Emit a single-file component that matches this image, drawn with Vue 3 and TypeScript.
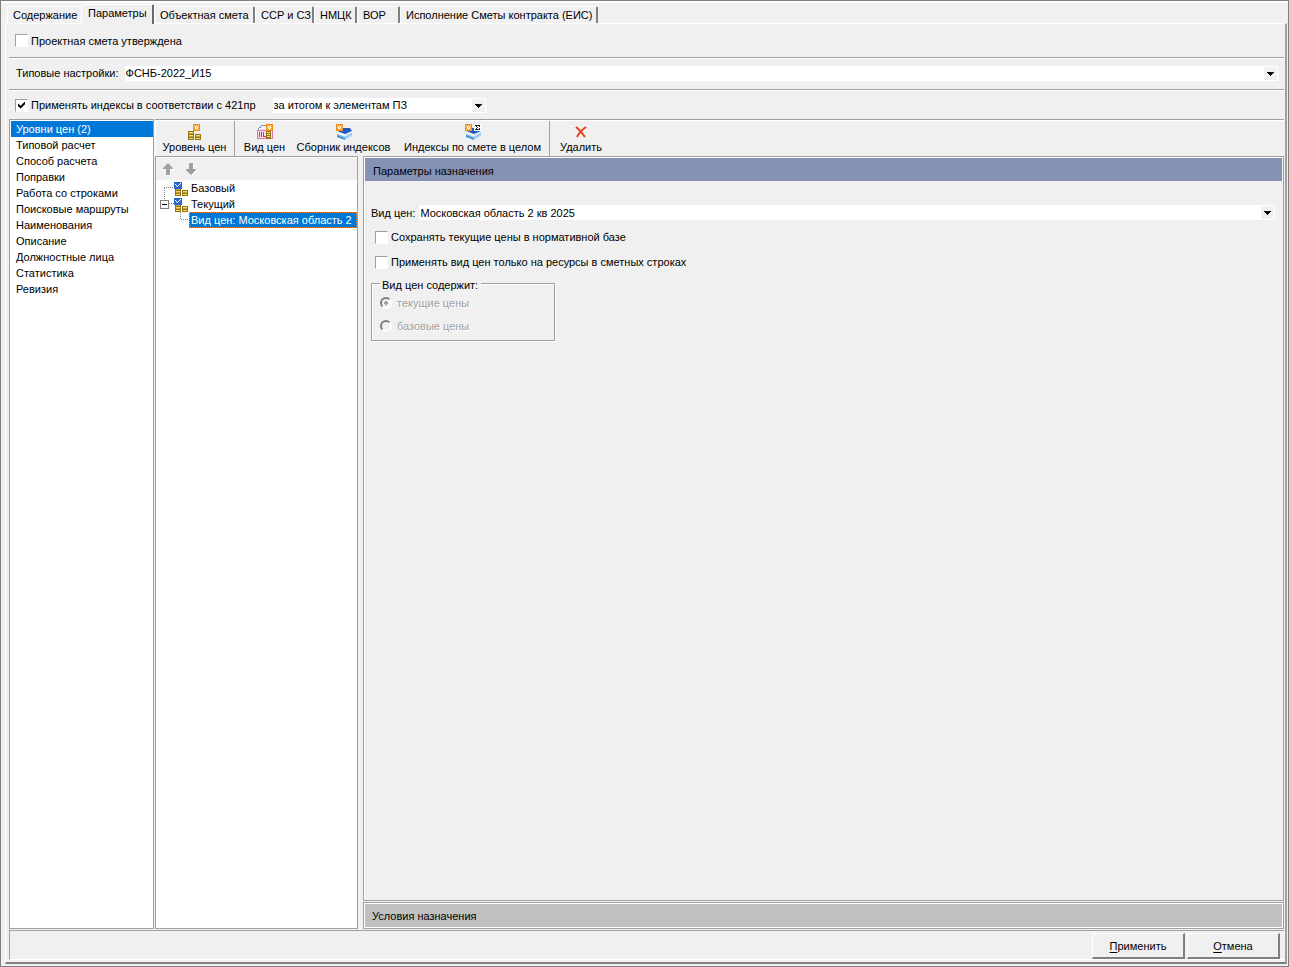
<script setup lang="ts">
import { ref } from 'vue'

interface Tool {
  label: string
  icon: string
  separated?: boolean
}

const tabs: string[] = ['Содержание', 'Параметры', 'Объектная смета', 'ССР и СЗ', 'НМЦК', 'ВОР', 'Исполнение Сметы контракта (ЕИС)']
const activeTab = ref(1)

const sections: string[] = [
  'Уровни цен (2)', 'Типовой расчет', 'Способ расчета', 'Поправки', 'Работа со строками',
  'Поисковые маршруты', 'Наименования', 'Описание', 'Должностные лица', 'Статистика', 'Ревизия',
]
const activeSection = ref(0)

const tools: Tool[] = [
  { label: 'Уровень цен', icon: 'level' },
  { label: 'Вид цен', icon: 'kind', separated: true },
  { label: 'Сборник индексов', icon: 'book' },
  { label: 'Индексы по смете в целом', icon: 'sigma' },
  { label: 'Удалить', icon: 'delete', separated: true },
]

const approved = ref(false)
const useIndexes = ref(true)
const keepPrices = ref(false)
const resourcesOnly = ref(false)
</script>

<template>
  <div class="window">
    <svg class="defs" width="0" height="0" aria-hidden="true">
      <defs>
        <g id="spark">
          <rect width="7" height="7" fill="#f58a14" />
          <path d="M1 1h1v1h-1zM3 1h1v1h-1zM5 1h1v1h-1zM1 3h1v1h-1zM5 3h1v1h-1zM1 5h1v1h-1zM3 5h1v1h-1zM5 5h1v1h-1z" fill="#ffd28c" />
          <path d="M2 2h3v3h-3z" fill="#fff6dc" />
          <rect x="3" y="3" width="1" height="1" fill="#f9b45c" />
        </g>
        <g id="coins">
          <path d="M0 0h6v9h-6z" fill="#93731a" />
          <path d="M1 1h4v1h-4zM1 4h4v1h-4zM1 7h4v1h-4z" fill="#f2dc6a" />
          <path d="M1 2h4v1h-4zM1 5h4v1h-4z" fill="#c9a62c" />
          <path d="M7 3h6v6h-6z" fill="#93731a" />
          <path d="M8 4h4v1h-4zM8 7h4v1h-4z" fill="#f2dc6a" />
          <path d="M8 5h4v1h-4z" fill="#c9a62c" />
        </g>
        <g id="books">
          <path d="M1 11l6-3 9 2-7 4z" fill="#5aa2dc" />
          <path d="M1 11l8 3v2l-8-3z" fill="#3f8fd0" />
          <path d="M9 14l7-4v2l-7 4z" fill="#b4d8f0" />
          <path d="M1 7l6-3h7l2 3-7 4z" fill="#2456c4" />
          <path d="M0 8l1-1 8 3 7-3v3l-7 4-9-4z" fill="#d9ecf8" />
          <path d="M1 8l8 3v1l-8-3z" fill="#fff" />
          <path d="M1 10l8 3 7-4v1l-7 4-8-3z" fill="#6fb0e2" />
        </g>
      </defs>
    </svg>

    <div class="tabs" role="tablist">
      <button v-for="(tab, i) in tabs" :key="tab" class="tab" :class="{ active: i === activeTab }" role="tab" :aria-selected="i === activeTab" @click="activeTab = i">{{ tab }}</button>
    </div>

    <main class="page">
      <div class="row">
        <label class="check"><input v-model="approved" type="checkbox"><span>Проектная смета утверждена</span></label>
      </div>
      <div class="row preset">
        <label for="preset">Типовые настройки:</label>
        <span class="combo">
          <select id="preset"><option>ФСНБ-2022_И15</option></select>
          <svg width="13" height="13" viewBox="0 0 13 13" shape-rendering="crispEdges"><path d="M0 0h13v13h-13z" fill="#f0f0f0" /><path d="M3 5h7v1h-1v1h-1v1h-1v1h-1v-1h-1v-1h-1v-1h-1z" /></svg>
        </span>
      </div>
      <div class="row indexes">
        <label class="check"><input v-model="useIndexes" type="checkbox"><span>Применять индексы в соответствии с 421пр</span></label>
        <span class="combo short">
          <select aria-label="Способ применения индексов"><option>за итогом к элементам ПЗ</option></select>
          <svg width="13" height="13" viewBox="0 0 13 13" shape-rendering="crispEdges"><path d="M0 0h13v13h-13z" fill="#f0f0f0" /><path d="M3 5h7v1h-1v1h-1v1h-1v1h-1v-1h-1v-1h-1v-1h-1z" /></svg>
        </span>
      </div>

      <div class="body">
        <nav class="sections">
          <button v-for="(s, i) in sections" :key="s" :class="{ active: i === activeSection }" @click="activeSection = i">{{ s }}</button>
        </nav>

        <div class="workspace">
          <div class="toolbar">
            <button v-for="t in tools" :key="t.label" class="tool" :class="[t.icon, { separated: t.separated }]">
              <svg v-if="t.icon === 'level'" width="16" height="16" viewBox="0 0 16 16" shape-rendering="crispEdges">
                <use href="#spark" x="6" /><use href="#coins" x="1" y="7" />
              </svg>
              <svg v-else-if="t.icon === 'kind'" width="16" height="16" viewBox="0 0 16 16" shape-rendering="crispEdges">
                <path d="M4 1h6v6h-9v-3h1v-1h1v-1h1z" fill="#8aa0ac" /><path d="M4 2h5v5h-7v-3h2z" fill="#eaf1f5" />
                <path d="M0 6h16v9h-16z" fill="#d878a8" /><path d="M1 7h14v7h-14z" fill="#fbdcec" />
                <path d="M2 8h1v5h-1zM4 8h1v5h-1zM6 8h1v5h-1zM6 12h3v1h-3z" fill="#c8327c" />
                <path d="M9 7h5v8h-5z" fill="#93731a" /><path d="M10 8h3v1h-3zM10 10h3v1h-3zM10 12h3v1h-3z" fill="#f2dc6a" />
                <use href="#spark" x="9" />
              </svg>
              <svg v-else-if="t.icon === 'book'" width="16" height="16" viewBox="0 0 16 16">
                <use href="#books" /><use href="#spark" />
              </svg>
              <svg v-else-if="t.icon === 'sigma'" width="16" height="16" viewBox="0 0 16 16">
                <use href="#books" /><use href="#spark" />
                <path d="M9 0h7v7h-7z" fill="#fff" /><path d="M10 1h5v2h-1v-1h-2v1h1v1h-1v1h2v-1h1v2h-5v-1h1v-1h1v-1h-1v-1h-1z" fill="#222" shape-rendering="crispEdges" />
              </svg>
              <svg v-else width="16" height="16" viewBox="0 0 16 16">
                <path d="M3 3q4 3 9 10M13 3q-6 4-9 10" fill="none" stroke="#e8401c" stroke-width="2" />
              </svg>
              <span>{{ t.label }}</span>
            </button>
          </div>

          <div class="columns">
            <section class="tree-panel">
              <div class="tree-head">
                <button aria-label="Вверх"><svg width="12" height="13" viewBox="0 0 12 13"><path d="M6 0l5 5v1h-3v6h-4v-6h-3v-1z" fill="#a0a0a0" /></svg></button>
                <button aria-label="Вниз"><svg width="12" height="13" viewBox="0 0 12 13"><path d="M6 12l5-5v-1h-3v-6h-4v6h-3v1z" fill="#a0a0a0" /></svg></button>
              </div>
              <div class="tree" role="tree">
                <div class="node" role="treeitem">
                  <svg width="31" height="16" viewBox="0 0 31 16" shape-rendering="crispEdges">
                    <path d="M6.500 8v8M6 7.500h10" stroke="#808080" stroke-dasharray="1 1" fill="none" />
                    <use href="#coins" x="17" y="7" /><rect x="16" y="2" width="8" height="7" fill="#2868d0" /><path d="M17 4h1v1h1v1h1v-1h1v-1h1v-1h1v1h-1v1h-1v1h-1v1h-1v-1h-1v-1h-1z" fill="#fff" />
                  </svg>
                  <span>Базовый</span>
                </div>
                <div class="node" role="treeitem" aria-expanded="true">
                  <svg width="31" height="16" viewBox="0 0 31 16" shape-rendering="crispEdges">
                    <path d="M6.500 0v4M11 7.500h5" stroke="#808080" stroke-dasharray="1 1" fill="none" />
                    <rect x="2.500" y="4.500" width="8" height="8" fill="#fff" stroke="#808080" /><path d="M4 8h5v1h-5z" />
                    <use href="#coins" x="17" y="7" /><rect x="16" y="2" width="8" height="7" fill="#2868d0" /><path d="M17 4h1v1h1v1h1v-1h1v-1h1v-1h1v1h-1v1h-1v1h-1v1h-1v-1h-1v-1h-1z" fill="#fff" />
                  </svg>
                  <span>Текущий</span>
                </div>
                <div class="node selected" role="treeitem" aria-selected="true">
                  <svg width="31" height="16" viewBox="0 0 31 16" shape-rendering="crispEdges"><path d="M22.500 0v8M23 7.500h8" stroke="#808080" stroke-dasharray="1 1" fill="none" /></svg>
                  <span>Вид цен: Московская область 2</span>
                </div>
              </div>
            </section>

            <div class="details">
              <section class="assignment">
                <h2>Параметры назначения</h2>
                <div class="field">
                  <label for="kind">Вид цен:</label>
                  <span class="combo">
                    <select id="kind"><option>Московская область 2 кв 2025</option></select>
                    <svg width="13" height="13" viewBox="0 0 13 13" shape-rendering="crispEdges"><path d="M0 0h13v13h-13z" fill="#f0f0f0" /><path d="M3 5h7v1h-1v1h-1v1h-1v1h-1v-1h-1v-1h-1v-1h-1z" /></svg>
                  </span>
                </div>
                <div class="options">
                  <label class="check"><input v-model="keepPrices" type="checkbox"><span>Сохранять текущие цены в нормативной базе</span></label>
                  <label class="check"><input v-model="resourcesOnly" type="checkbox"><span>Применять вид цен только на ресурсы в сметных строках</span></label>
                </div>
                <fieldset disabled>
                  <legend>Вид цен содержит:</legend>
                  <label><input type="radio" name="content" checked><span>текущие цены</span></label>
                  <label><input type="radio" name="content"><span>базовые цены</span></label>
                </fieldset>
              </section>
              <section class="conditions"><h2>Условия назначения</h2></section>
            </div>
          </div>
        </div>
      </div>

      <footer class="actions">
        <button><u>П</u>рименить</button>
        <button><u>О</u>тмена</button>
      </footer>
    </main>
  </div>
</template>

<style>
body { background: #f0f0f0; }
</style>

<style scoped>
* { box-sizing: border-box; }
.window { display: flex; flex-direction: column; min-height: 100vh; padding: 3px 1px 2px 4px; border: 1px solid #808080; box-shadow: inset 0 2px #fff; background: #f0f0f0; color: #000; font: 11px/16px "Liberation Sans", Arial, sans-serif; }
.defs { position: absolute; }
button, select { margin: 0; padding: 0; border: 0; border-radius: 0; background: transparent; color: inherit; font: inherit; }
h2 { margin: 0; font: inherit; }
span, label, button { white-space: nowrap; }

.tabs { display: grid; grid-template-columns: 74px 73px 101px 59px 43px 43px 198px; align-items: end; height: 19px; padding-left: 2px; flex: none; }
.tab { height: 17px; padding: 0 5px; text-align: left; border: solid; border-width: 1px 2px 0 1px; border-color: #fff #808080 #fff #fff; border-radius: 2px 2px 0 0; line-height: 16px; }
.tab:first-child { border-right: 0; }
.tab.active { position: relative; height: 20px; padding-left: 6px; padding-bottom: 4px; margin-bottom: -1px; background: #f0f0f0; border-right-color: #696969; }

.page { flex: 1; display: flex; flex-direction: column; min-width: 0; padding: 0 1px 2px 3px; border: solid; border-width: 1px 2px 2px 1px; border-color: #fff #a0a0a0 #808080 #fff; }
.row { display: flex; align-items: center; height: 32px; border-bottom: 1px solid #fff; box-shadow: inset 0 -1px #a0a0a0; flex: none; }
.row:first-child { height: 35px; padding-left: 6px; padding-bottom: 1px; }
.indexes { height: 28px; border: 0; box-shadow: none; padding-left: 6px; gap: 17px; }
.preset { padding: 0 6px 2px 7px; gap: 6px; }
.preset label { padding-bottom: 2px; }
.check { display: flex; align-items: center; gap: 3px; }
.check input { appearance: none; position: relative; width: 13px; height: 13px; margin: 0; flex: none; background: #fff; border: 1px solid; border-color: #a0a0a0 #fff #fff #a0a0a0; }
.check input:checked::after { content: ""; position: absolute; inset: 2px; background: #000; clip-path: polygon(0 30%, 38% 62%, 100% 0, 100% 40%, 38% 100%, 0 68%); }
.combo { position: relative; display: flex; flex: 1; height: 15px; background: #fff; }
.combo select { appearance: none; width: 100%; height: 15px; padding-left: 1px; line-height: 15px; outline: 0; }
.combo svg { position: absolute; right: 1px; top: 1px; pointer-events: none; }
.combo.short { flex: 0 0 213px; }

.body { flex: 1; display: grid; grid-template-columns: 145px minmax(0, 1fr); gap: 1px; }
.sections { display: flex; flex-direction: column; padding: 1px 0; background: #fff; border: 1px solid #a0a0a0; }
.sections button { height: 16px; padding-left: 5px; margin-left: 1px; text-align: left; line-height: 16px; }
.sections .active { background: #0078d7; color: #fff; }
.workspace { display: flex; flex-direction: column; border-top: 1px solid #a0a0a0; box-shadow: inset 1px 1px #fff; }
.toolbar { display: flex; height: 36px; padding-top: 1px; flex: none; }
.tool { display: flex; flex-direction: column; align-items: center; justify-content: flex-start; padding: 3px 6px 0; }
.tool span { line-height: 14px; }
.tool svg { display: block; }
.tool.separated { border-left: 1px solid #a0a0a0; padding-left: 9px; }
.level { width: 79px; }
.kind { width: 57px; }
.book { width: 105px; }
.sigma { width: 153px; }
.delete { width: 60px; }

.columns { flex: 1; display: grid; grid-template-columns: 203px minmax(0, 1fr); gap: 5px; }
.tree-panel { display: flex; flex-direction: column; background: #fff; border: 1px solid #a0a0a0; min-width: 0; }
.tree-head { display: flex; align-items: center; gap: 11px; height: 23px; padding-left: 6px; background: #f0f0f0; border-top: 1px solid #fff; }
.tree-head svg { display: block; filter: drop-shadow(1px 1px #fff); }
.tree { padding-left: 2px; overflow: hidden; }
.node { display: flex; height: 16px; }
.node svg { flex: none; }
.node span { line-height: 16px; padding-left: 2px; }
.selected span { flex: 1; background: #0078d7; color: #fff; outline: 1px dotted #ff8728; outline-offset: -1px; }

.details { display: flex; flex-direction: column; gap: 1px; min-width: 0; }
.assignment { flex: 1; border: 1px solid #a0a0a0; box-shadow: inset 1px 1px #fff; padding: 1px; }
.assignment h2 { height: 23px; padding-left: 8px; background: #8691b6; line-height: 26px; }
.field { display: flex; align-items: center; gap: 4px; margin: 24px 7px 0 6px; height: 15px; }
.field select { padding-top: 1px; }
.options { display: grid; gap: 9px; margin: 9px 0 0 10px; }
fieldset { display: grid; gap: 7px; width: 184px; margin: 5px 0 0 6px; padding: 4px 8px 6px; border: 1px solid #a0a0a0; box-shadow: 1px 1px #fff, inset 1px 1px #fff; }
legend { padding: 4px 3px 0 2px; line-height: 12px; background: #f0f0f0; }
fieldset label { display: flex; align-items: center; gap: 5px; color: #a0a0a0; text-shadow: 1px 1px #fff; }
fieldset input { appearance: none; width: 12px; height: 12px; margin: 0; border: 2px solid; border-color: #808080 #fff #fff #808080; border-radius: 50%; }
fieldset input:checked { background: radial-gradient(circle, #a0a0a0 2px, transparent 2px); }
.conditions { height: 27px; padding: 1px; border: 1px solid #a0a0a0; background: #fff; }
.conditions h2 { height: 23px; padding-left: 7px; background: #c0c0c0; line-height: 24px; }

.actions { display: flex; justify-content: flex-end; gap: 2px; margin-top: 1px; padding: 2px 4px 0 0; border-left: 1px solid #a0a0a0; border-top: 1px solid #a0a0a0; border-bottom: 1px solid #fff; }
.actions button { width: 93px; height: 26px; border: solid; border-width: 1px 2px 2px 1px; border-color: #fff #808080 #808080 #fff; }
.actions u { text-underline-offset: 2px; }
</style>
